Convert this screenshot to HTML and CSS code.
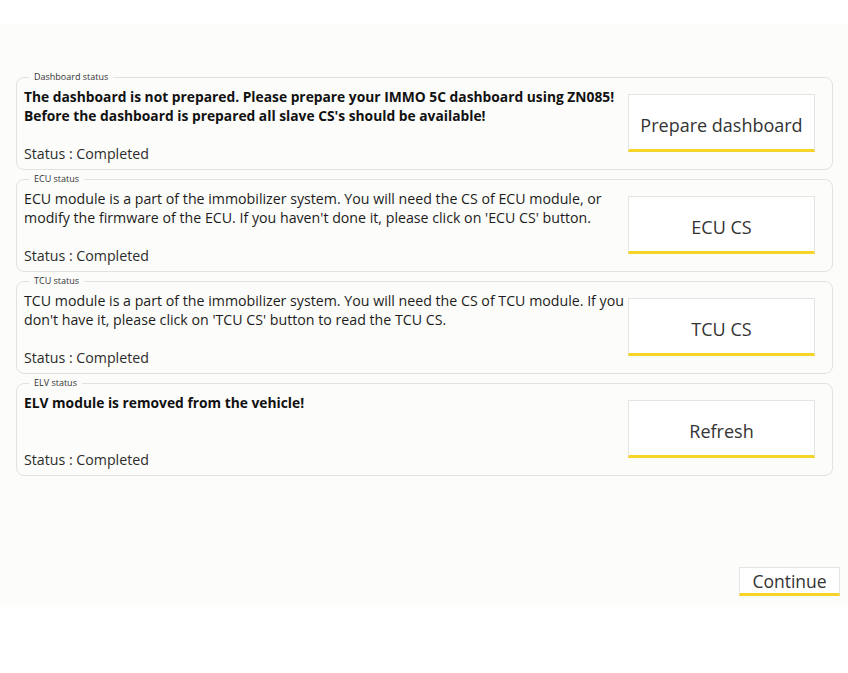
FILE: index.html
```html
<!DOCTYPE html>
<html lang="en">
  <head>
    <meta charset="UTF-8" />
    <meta name="viewport" content="width=device-width, initial-scale=1.0" />
    <title>Immobilizer status</title>
    <link rel="stylesheet" href="styles.css">
  </head>
  <body>
    <div class="panel">
      <fieldset class="group">
        <legend>Dashboard status</legend>
        <div class="info">
          <p class="message bold">The dashboard is not prepared. Please prepare your IMMO 5C dashboard using ZN085!<br>Before the dashboard is prepared all slave CS's should be available!</p>
          <p class="status">Status : Completed</p>
        </div>
        <button class="action">Prepare dashboard</button>
      </fieldset>

      <fieldset class="group">
        <legend>ECU status</legend>
        <div class="info">
          <p class="message">ECU module is a part of the immobilizer system. You will need the CS of ECU module, or<br>modify the firmware of the ECU. If you haven't done it, please click on 'ECU CS' button.</p>
          <p class="status">Status : Completed</p>
        </div>
        <button class="action">ECU CS</button>
      </fieldset>

      <fieldset class="group">
        <legend>TCU status</legend>
        <div class="info">
          <p class="message">TCU module is a part of the immobilizer system. You will need the CS of TCU module. If you<br>don't have it, please click on 'TCU CS' button to read the TCU CS.</p>
          <p class="status">Status : Completed</p>
        </div>
        <button class="action">TCU CS</button>
      </fieldset>

      <fieldset class="group">
        <legend>ELV status</legend>
        <div class="info">
          <p class="message bold">ELV module is removed from the vehicle!</p>
          <p class="status">Status : Completed</p>
        </div>
        <button class="action">Refresh</button>
      </fieldset>

      <div class="footer">
        <button class="continue">Continue</button>
      </div>
    </div>
  </body>
</html>
```

FILE: styles.css
```css
/* Page: white window with the wizard panel in the middle */
body {
  margin: 0;
  background: #ffffff;
  font-family: "Open Sans", "Noto Sans", sans-serif;
  color: #1c1c1c;
}

.panel {
  margin-top: 24px;
  height: 583px;
  background: #fcfcfa;
  padding: 48px 15px 0 16px;
  box-sizing: border-box;
  display: flex;
  flex-direction: column;
  gap: 4.5px;
}

/* --- Status groups --- */

.group {
  margin: 0;
  border: 1px solid #e2e2e0;
  border-radius: 8px;
  padding: 5px 17px 5px 7px;
  height: 97.5px;
  box-sizing: border-box;
  display: grid;
  grid-template-columns: 1fr 187px;
  align-items: start;
  background: #fcfcfa;
}

.group legend {
  font-size: 9px;
  line-height: 10px;
  color: #333;
  margin-left: 5px;
  padding: 0 5px;
}

.info {
  height: 76px;
  display: flex;
  flex-direction: column;
  justify-content: space-between;
}

.info p {
  margin: 0;
  font-size: 14.2px;
  line-height: 19px;
}

.message.bold {
  font-size: 13.8px;
  font-weight: 700;
  color: #111;
}

.status {
  color: #2c2c2c;
}

/* Buttons with the yellow underline */
.action,
.continue {
  font-family: inherit;
  color: #333;
  background: #ffffff;
  border: 1px solid #e4e4e2;
  border-bottom: 3px solid #f7d42a;
  border-radius: 0;
  cursor: pointer;
}

.action {
  margin-top: 7px;
  height: 58px;
  font-size: 18px;
  padding: 6px 0 0;
}

.footer {
  margin-top: auto;
  margin-bottom: 11px;
  display: flex;
  justify-content: flex-end;
}

.continue {
  width: 101px;
  height: 29px;
  font-size: 17.5px;
  padding: 0;
  line-height: 24px;
  margin-right: -7px;
}
```
